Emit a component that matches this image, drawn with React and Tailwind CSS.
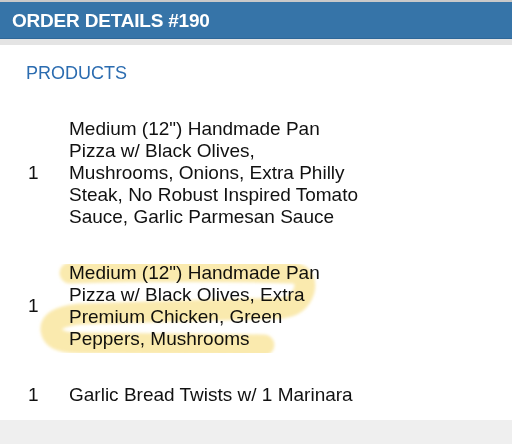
import React from "react";

const items = [
  {
    qty: 1,
    name: "Medium (12\") Handmade Pan Pizza w/ Black Olives, Mushrooms, Onions, Extra Philly Steak, No Robust Inspired Tomato Sauce, Garlic Parmesan Sauce",
  },
  {
    qty: 1,
    name: "Medium (12\") Handmade Pan Pizza w/ Black Olives, Extra Premium Chicken, Green Peppers, Mushrooms",
  },
  { qty: 1, name: "Garlic Bread Twists w/ 1 Marinara" },
];

function Highlight() {
  // hand-drawn marker stroke over the second item
  return (
    <svg
      className="absolute top-0 left-0 pointer-events-none mix-blend-multiply"
      width="512"
      height="444"
      viewBox="0 0 512 444"
    >
      <defs>
        <filter id="soft" x="-10%" y="-10%" width="120%" height="120%">
          <feGaussianBlur stdDeviation="1.6" />
        </filter>
      </defs>
      <path
        d="M70 273 C140 271 240 271 294 273 Q308 276 304 291 Q299 306 282 308 L80 314 Q50 317 51 330 Q53 343 78 343 L264 345"
        fill="none"
        stroke="#f7dc78"
        strokeOpacity="0.6"
        strokeWidth="21"
        strokeLinecap="round"
        strokeLinejoin="round"
        filter="url(#soft)"
      />
    </svg>
  );
}

export default function App() {
  return (
    <div className="relative min-h-screen bg-[#efefef] font-['Liberation_Sans',Arial,sans-serif]">
      <div className="h-[2px] bg-[#c9c9c9]" />
      <div className="h-[36px] bg-[#3674a8] flex items-center pl-[12px]">
        <h1 className="text-[19px] font-bold tracking-[-0.2px] text-white leading-none">ORDER DETAILS #190</h1>
      </div>
      <div className="h-[1px] bg-[#2e6798]" />
      <div className="h-[6px] bg-[#e4e4e4]" />

      <div className="bg-white pt-[17px] pb-[14px]">
        <h2 className="pl-[26px] text-[18px] leading-[22px] text-[#2b6cb0]">PRODUCTS</h2>
        <ul className="mt-[34px] flex flex-col gap-[34px]">
          {items.map((item, i) => (
            <li key={i} className="flex items-center pl-[28px]">
              <span className="w-[41px] text-[19px] leading-[22px] text-[#111]">{item.qty}</span>
              <span className="w-[293px] text-[19px] leading-[22px] text-[#111]">
                {item.name}
              </span>
            </li>
          ))}
        </ul>
      </div>

      <Highlight />
    </div>
  );
}
